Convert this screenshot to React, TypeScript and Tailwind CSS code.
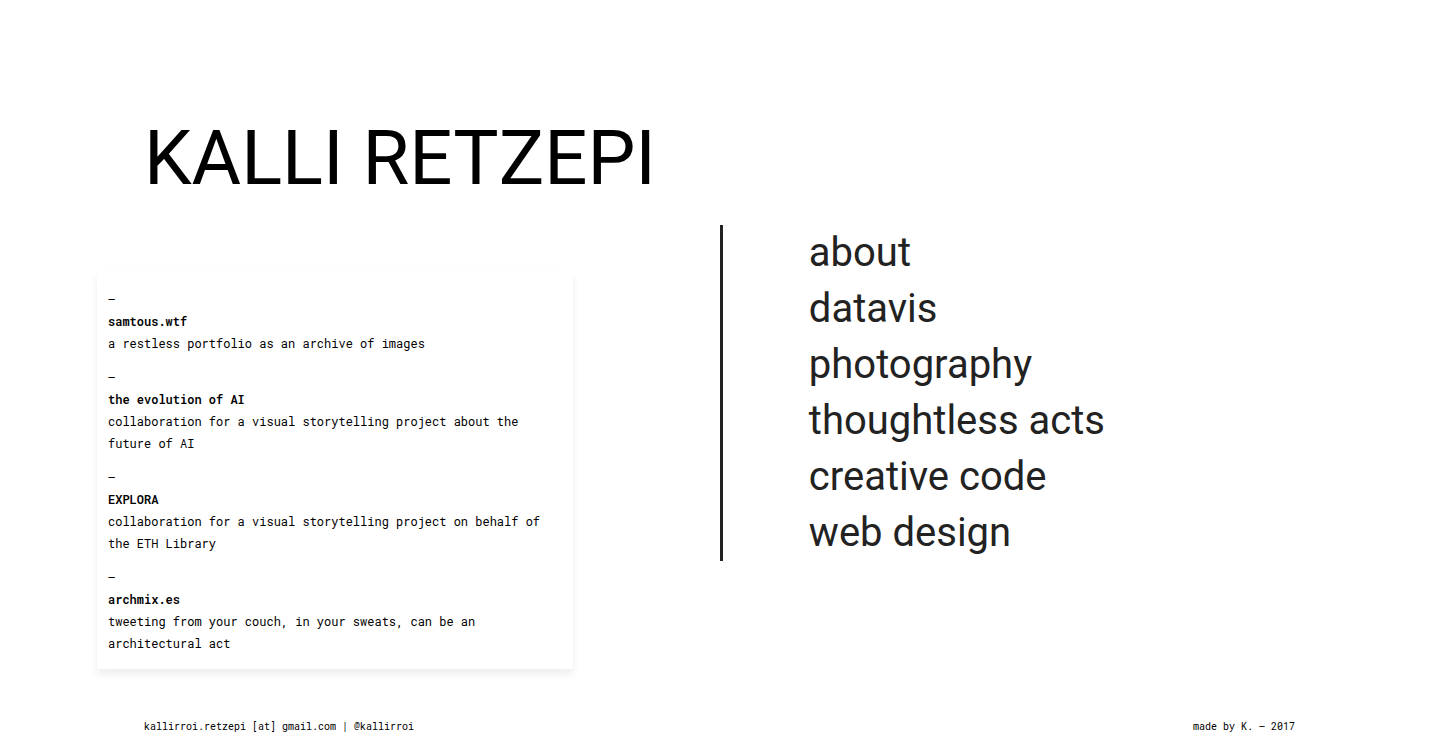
const projects = [
  { name: 'samtous.wtf', text: 'a restless portfolio as an archive of images' },
  { name: 'the evolution of AI', text: 'collaboration for a visual storytelling project about the future of AI' },
  { name: 'EXPLORA', text: 'collaboration for a visual storytelling project on behalf of the ETH Library' },
  { name: 'archmix.es', text: 'tweeting from your couch, in your sweats, can be an architectural act' },
];

const links = ['about', 'datavis', 'photography', 'thoughtless acts', 'creative code', 'web design'];

export default function App() {
  return (
    <div className="flex min-h-screen flex-col bg-white font-['Roboto',sans-serif] text-black">
      <header className="px-[10%] pt-28">
        <h1 className="text-[76px] leading-[92px]">KALLI RETZEPI</h1>
      </header>
      <main className="grid grow grid-cols-2 items-start pt-[21px]">
        <section className="mt-[47px] ml-[97px] max-w-[476px] bg-white px-[11px] pt-4 pb-[15px] shadow-[0_5px_8px_rgba(0,0,0,0.07)] font-['Roboto_Mono','Liberation_Mono',monospace] text-xs leading-[22px]">
          <ul className="flex flex-col gap-3">
            {projects.map((p) => (
              <li key={p.name}>
                <div>–</div>
                <h2 className="font-semibold">{p.name}</h2>
                <p>{p.text}</p>
              </li>
            ))}
          </ul>
        </section>
        <nav className="border-l-3 border-[#222] pl-[12%]">
          <ul className="text-[40px] leading-[56px] text-[#222]">
            {links.map((l) => (
              <li key={l}>
                <a href="#">{l}</a>
              </li>
            ))}
          </ul>
        </nav>
      </main>
      <footer className="flex justify-between px-[10%] pb-[15px] font-['Roboto_Mono','Liberation_Mono',monospace] text-[10px] leading-4">
        <p>kallirroi.retzepi [at] gmail.com | @kallirroi</p>
        <p>made by K. – 2017</p>
      </footer>
    </div>
  );
}
